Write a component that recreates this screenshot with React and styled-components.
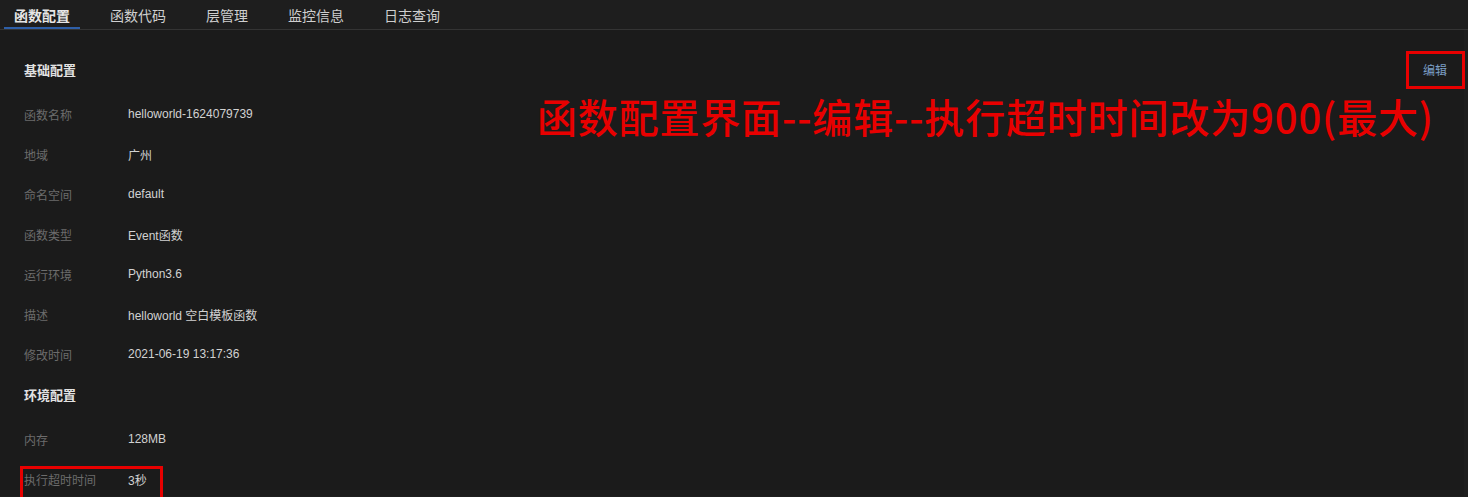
import React from "react";
import styled, { createGlobalStyle } from "styled-components";

const Global = createGlobalStyle`
  html, body { margin: 0; padding: 0; background: #1e1e1e; }
  body {
    width: 1468px; height: 497px; overflow: hidden;
    font-family: "Liberation Sans", Arial, "Noto Sans CJK SC", sans-serif;
  }
`;

const Page = styled.div`
  position: relative;
  width: 1468px;
  height: 497px;
  overflow: hidden;
  background: #1e1e1e;
`;

const TabBar = styled.div`
  display: flex;
  gap: 20px;
  height: 29px;
  padding-left: 4px;
  border-bottom: 1px solid #343434;
`;

const Tab = styled.div`
  height: 29px;
  box-sizing: border-box;
  padding: 0 10px;
  display: flex;
  align-items: center;
  font-size: 14px;
  font-weight: ${(p) => (p.$active ? 700 : 400)};
  color: ${(p) => (p.$active ? "#e6e6e6" : "#cfcfcf")};
  border-bottom: 2px solid ${(p) => (p.$active ? "#2e5fa8" : "transparent")};
  padding-top: 2px;
`;

const Panel = styled.div`
  width: 1464px;
  height: 466px;
  box-sizing: border-box;
  background: #1b1b1b;
  padding: 19px 17px 0 24px;
`;

const SectionHead = styled.div`
  display: flex;
  align-items: center;
  justify-content: space-between;
  height: 40px;
  margin-bottom: 5px;
`;

const SectionTitle = styled.div`
  font-size: 13px;
  font-weight: 700;
  color: #e2e2e2;
`;

const EditLink = styled.a`
  font-size: 12px;
  color: #7b9fc6;
  text-decoration: none;
`;

const Row = styled.div`
  display: flex;
  align-items: center;
  height: 40px;
  font-size: 12px;
`;

const Label = styled.div`
  width: 104px;
  color: #6c6c6c;
`;

const Value = styled.div`
  color: #d2d2d2;
`;

const Annotation = styled.div`
  position: absolute;
  left: 537px;
  top: 93px;
  font-family: "Noto Sans CJK SC", sans-serif;
  font-size: 40px;
  line-height: 46px;
  font-weight: 500;
  letter-spacing: 0.85px;
  color: #e80000;
  white-space: nowrap;
`;

const RedBox = styled.div`
  position: absolute;
  box-sizing: border-box;
  border: 3px solid #e80000;
`;

const basic = [
  ["函数名称", "helloworld-1624079739"],
  ["地域", "广州"],
  ["命名空间", "default"],
  ["函数类型", "Event函数"],
  ["运行环境", "Python3.6"],
  ["描述", "helloworld 空白模板函数"],
  ["修改时间", "2021-06-19 13:17:36"],
];

const env = [
  ["内存", "128MB"],
  ["执行超时时间", "3秒"],
];

const tabs = ["函数配置", "函数代码", "层管理", "监控信息", "日志查询"];

export default function App() {
  return (
    <Page>
      <Global />
      <TabBar>
        {tabs.map((t, i) => (
          <Tab key={t} $active={i === 0}>
            {t}
          </Tab>
        ))}
      </TabBar>
      <Panel>
        <SectionHead>
          <SectionTitle>基础配置</SectionTitle>
          <EditLink href="#">编辑</EditLink>
        </SectionHead>
        {basic.map(([l, v]) => (
          <Row key={l}>
            <Label>{l}</Label>
            <Value>{v}</Value>
          </Row>
        ))}
        <SectionHead>
          <SectionTitle>环境配置</SectionTitle>
        </SectionHead>
        {env.map(([l, v]) => (
          <Row key={l}>
            <Label>{l}</Label>
            <Value>{v}</Value>
          </Row>
        ))}
      </Panel>
      <Annotation>函数配置界面--编辑--执行超时时间改为900(最大)</Annotation>
      <RedBox style={{ left: 1406, top: 51, width: 59, height: 38 }} />
      <RedBox style={{ left: 20, top: 466, width: 143, height: 34 }} />
    </Page>
  );
}
